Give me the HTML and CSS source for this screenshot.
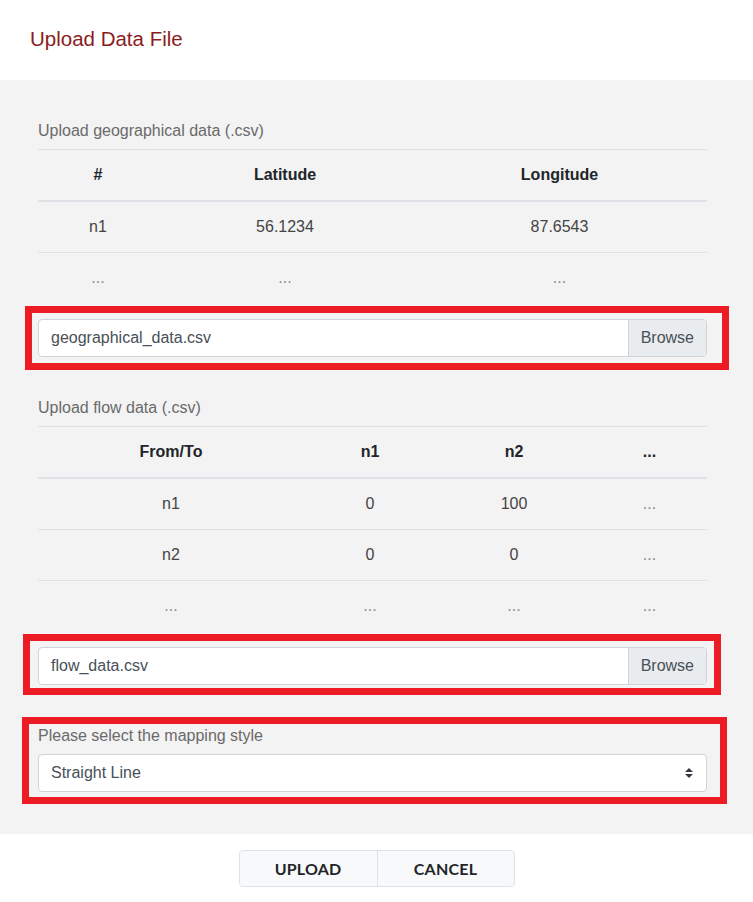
FILE: index.html
```html
<!DOCTYPE html>
<html lang="en">
<head>
<meta charset="utf-8">
<title>Upload Data File</title>
<link rel="stylesheet" href="styles.css">
</head>
<body>
<div class="modal">
  <header class="modal-header">
    <h1 class="modal-title">Upload Data File</h1>
  </header>
  <main class="modal-body">
    <div class="section-label">Upload geographical data (.csv)</div>
    <table class="data-table">
      <colgroup>
        <col class="gc1"><col class="gc2"><col class="gc3">
      </colgroup>
      <thead>
        <tr><th>#</th><th>Latitude</th><th>Longitude</th></tr>
      </thead>
      <tbody>
        <tr><td>n1</td><td>56.1234</td><td>87.6543</td></tr>
        <tr><td class="more">...</td><td class="more">...</td><td class="more">...</td></tr>
      </tbody>
    </table>

    <div class="mark mark-geo">
      <div class="file-input">
        <span class="file-name">geographical_data.csv</span>
        <span class="file-browse">Browse</span>
      </div>
    </div>

    <div class="section-label">Upload flow data (.csv)</div>
    <table class="data-table">
      <colgroup>
        <col class="fc1"><col class="fc2"><col class="fc3"><col class="fc4">
      </colgroup>
      <thead>
        <tr><th>From/To</th><th>n1</th><th>n2</th><th>...</th></tr>
      </thead>
      <tbody>
        <tr><td>n1</td><td>0</td><td>100</td><td class="more">...</td></tr>
        <tr><td>n2</td><td>0</td><td>0</td><td class="more">...</td></tr>
        <tr><td class="more">...</td><td class="more">...</td><td class="more">...</td><td class="more">...</td></tr>
      </tbody>
    </table>

    <div class="mark mark-flow">
      <div class="file-input">
        <span class="file-name">flow_data.csv</span>
        <span class="file-browse">Browse</span>
      </div>
    </div>

    <div class="mark mark-style">
      <div class="select-label">Please select the mapping style</div>
      <div class="select">
        <span class="select-value">Straight Line</span>
        <svg class="select-arrows" width="8" height="10" viewBox="0 0 8 10" aria-hidden="true">
          <path d="M4 0 L8 4 L0 4 Z" fill="#343a40"/>
          <path d="M0 6 L8 6 L4 10 Z" fill="#343a40"/>
        </svg>
      </div>
    </div>
  </main>
  <footer class="modal-footer">
    <div class="btn-group">
      <button class="btn">UPLOAD</button>
      <button class="btn">CANCEL</button>
    </div>
  </footer>
</div>
</body>
</html>
```

FILE: styles.css
```css
* { box-sizing: border-box; }

html, body {
  margin: 0;
  padding: 0;
  background: #ffffff;
}

body {
  font-family: "Liberation Sans", Arial, sans-serif;
  font-size: 16px;
  line-height: 24px;
  color: #212529;
}

.modal {
  width: 753px;
}

.modal-header {
  height: 80px;
  padding: 24px 30px 0;
  background: #ffffff;
}

.modal-title {
  margin: 0;
  font-size: 20.5px;
  line-height: 30px;
  font-weight: normal;
  color: #8b1c1c;
}

.modal-body {
  background: #f3f3f3;
  padding: 39px 46px 30px 38px;
}

.section-label {
  color: #6a6a6a;
  margin-bottom: 6px;
}

.data-table {
  width: 669px;
  border-collapse: collapse;
  table-layout: fixed;
}

.gc1 { width: 120px; }
.gc2 { width: 254px; }
.gc3 { width: 295px; }

.fc1 { width: 266px; }
.fc2 { width: 132px; }
.fc3 { width: 156px; }
.fc4 { width: 115px; }

.data-table th,
.data-table td {
  padding: 13px 12px;
  text-align: center;
  border-top: 1px solid #dee2e6;
}

.data-table th {
  font-weight: bold;
  color: #212529;
  border-bottom: 2px solid #dee2e6;
}

.data-table td {
  color: #444444;
}

.data-table td.more {
  color: #8a8a8a;
}

.data-table tbody tr:first-child td {
  border-top: none;
}

.mark {
  border: 7px solid #ed1c24;
}

.mark-geo {
  margin: 3px -22px 26px -13px;
  padding: 6px 15px 6px 6px;
}

.mark-flow {
  margin: 3px -14px 22px -15px;
  padding: 6px 7px 3px 8px;
}

.mark-style {
  margin: 0 -20px 0 -16px;
  padding: 0 13px 5px 9px;
}

.file-input {
  display: flex;
  height: 38px;
  background: #ffffff;
  border: 1px solid #ced4da;
  border-radius: 4px;
  overflow: hidden;
}

.file-name {
  flex: 1;
  padding: 6px 12px;
  color: #495057;
}

.file-browse {
  padding: 6px 12px;
  background: #e9ecef;
  border-left: 1px solid #ced4da;
  color: #495057;
}

.select-label {
  color: #6a6a6a;
  margin-bottom: 6px;
}

.select {
  display: flex;
  align-items: center;
  justify-content: space-between;
  height: 38px;
  padding: 6px 13px 6px 12px;
  background: #ffffff;
  border: 1px solid #ced4da;
  border-radius: 4px;
  color: #495057;
}

.select-arrows {
  display: block;
}

.modal-footer {
  height: 68px;
  padding-top: 16px;
  display: flex;
  justify-content: center;
  align-items: flex-start;
  background: #ffffff;
}

.btn-group {
  display: flex;
  border: 1px solid #dee2e6;
  border-radius: 4px;
  overflow: hidden;
  background: #f8f9fa;
}

.btn {
  width: 137px;
  height: 35px;
  margin: 0;
  padding: 0;
  border: none;
  background: #f8f9fa;
  font-family: Lato, "Liberation Sans", sans-serif;
  font-weight: 700;
  font-size: 16px;
  color: #212529;
  letter-spacing: 0.2px;
}

.btn + .btn {
  border-left: 1px solid #dee2e6;
}
```
